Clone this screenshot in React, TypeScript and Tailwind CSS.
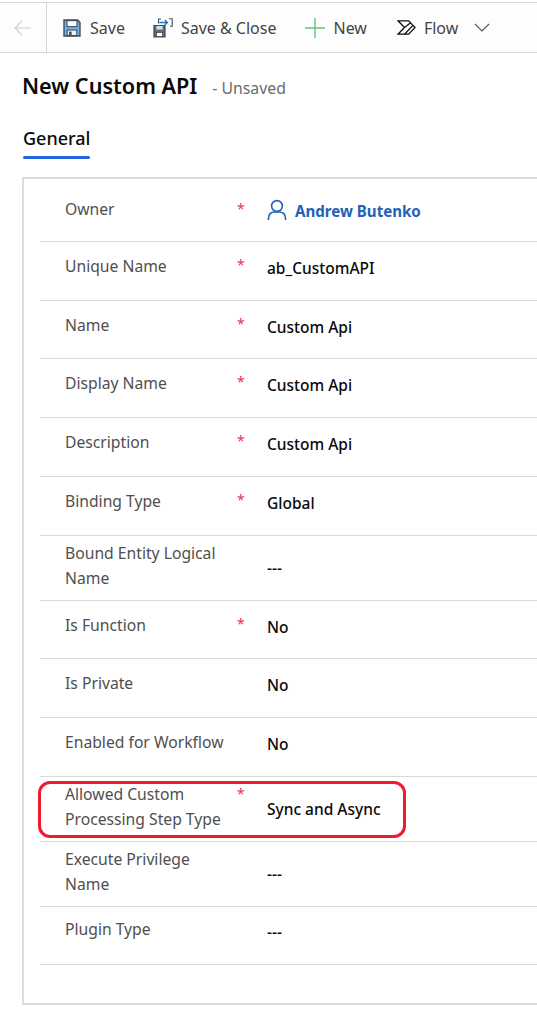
const font = "[font-family:'Noto_Sans',sans-serif]";

function SaveIcon() {
  return (
    <svg width="18" height="18" viewBox="0 0 18 18" className="shrink-0">
      <path d="M1 1h13.5L17 3.5V17H1z" fill="#6fb3ea" stroke="#3f4b58" strokeWidth="1.4" />
      <rect x="4" y="1.6" width="10" height="6" fill="#fff" stroke="#3f4b58" strokeWidth="1.1" />
      <rect x="4.2" y="11" width="9.6" height="5.6" fill="#eef2f5" stroke="#3f4b58" strokeWidth="1.1" />
      <rect x="6" y="12.6" width="2.6" height="3.6" fill="#3f4b58" />
    </svg>
  );
}

function SaveCloseIcon() {
  return (
    <svg width="20" height="20" viewBox="0 0 20 20" className="shrink-0">
      <path d="M1 7.5h11V19H1z" fill="#5f6b78" stroke="#3f4b58" strokeWidth="1.2" />
      <rect x="3.4" y="8" width="6.2" height="3.6" fill="#d8dee4" />
      <rect x="3.4" y="14.4" width="6.2" height="4.2" fill="#fff" stroke="#3f4b58" strokeWidth="0.8" />
      <path d="M5.5 5.5V1H8M16 .8h3.2v7.4H17" fill="none" stroke="#3f4b58" strokeWidth="1.1" />
      <path d="M6.5 4.5h8M11.8 2l2.6 2.5L11.8 7" fill="none" stroke="#1f6fd6" strokeWidth="1.3" />
    </svg>
  );
}

function FlowIcon() {
  return (
    <svg width="19" height="15" viewBox="0 0 19 15" className="shrink-0" fill="none" stroke="#111" strokeWidth="1.3">
      <path d="M1 .8h10.7L18 7.5 11.7 14.2H1L7.5 7.5z" />
      <path d="M7.5 7.5 13.6 2.8M7.6 14.2 15.6 5.6" />
    </svg>
  );
}

type RowProps = { label: string; value: string; req?: boolean; h: string; kind?: "one" | "two" | "owner" | "plugin" };

function Row({ label, value, req, h, kind = "one" }: RowProps) {
  const labelPad = kind === "two" ? "pt-[5px]" : kind === "owner" ? "pt-[18px]" : kind === "plugin" ? "pt-[10px]" : "pt-[12px]";
  const starPad = kind === "two" ? "pt-[4px]" : kind === "owner" ? "pt-[17px]" : "pt-[10px]";
  const valuePad = kind === "two" ? "pt-[20px]" : kind === "plugin" ? "pt-[13px]" : "pt-[14px]";
  return (
    <div className={`flex border-b border-[#d9d9d9] ${h}`}>
      <div className={`w-[197px] shrink-0 pl-[25px] pr-2 text-[15.7px] leading-[25px] text-[#4f4f4f] ${labelPad}`}>{label}</div>
      <div className={`w-[30px] shrink-0 text-[14px] leading-[25px] text-[#e8344a] ${starPad}`}>{req ? "*" : ""}</div>
      {kind === "owner" ? (
        <div className="flex items-start gap-[8px] pt-[20px] text-[15.1px] font-bold leading-[25px] text-[#1f62b8]">
          <svg width="20" height="22" viewBox="0 0 20 22" fill="none" stroke="#1f62b8" strokeWidth="1.6">
            <circle cx="10" cy="7" r="5.4" />
            <path d="M1.5 21v-1.5C1.5 15.5 4 13 8 13h4c4 0 6.5 2.5 6.5 6.5V21" />
          </svg>
          {value}
        </div>
      ) : (
        <div className={`text-[15.5px] font-medium leading-[25px] text-[#0a0a0a] ${valuePad}`}>{value}</div>
      )}
    </div>
  );
}

export default function App() {
  return (
    <div className={`h-[1024px] w-[537px] overflow-hidden bg-white ${font}`}>
      <div className="mt-[2px] flex h-[51px] items-center border-y border-[#d9d9d9] bg-[#fdfdfd] text-[16px] text-[#444]">
        <div className="flex h-full w-[47px] shrink-0 items-center justify-center border-r border-[#d5d5d5]">
          <svg width="18" height="16" viewBox="0 0 18 16" fill="none" stroke="#cfcfcf" strokeWidth="1.2">
            <path d="M17 8H1M8 1 1 8l7 7" />
          </svg>
        </div>
        <div className="ml-[16px] flex items-center gap-[9px]"><SaveIcon /><span>Save</span></div>
        <div className="ml-[28px] flex items-center gap-[8px]"><SaveCloseIcon /><span>Save &amp; Close</span></div>
        <div className="ml-[29px] flex items-center gap-[8px]">
          <svg width="20" height="20" viewBox="0 0 20 20" stroke="#5fc281" strokeWidth="1.4"><path d="M10 0v20M0 10h20" /></svg>
          <span>New</span>
        </div>
        <div className="ml-[30px] flex items-center gap-[8px]"><FlowIcon /><span>Flow</span></div>
        <svg className="ml-[16px]" width="16" height="9" viewBox="0 0 16 9" fill="none" stroke="#555" strokeWidth="1.1"><path d="M1 1l7 7 7-7" /></svg>
      </div>
      <div className="ml-[22px] mt-[17px] flex items-baseline">
        <h1 className="text-[21.6px] font-semibold leading-[32px] text-[#0a0a0a]">New Custom API</h1>
        <span className="ml-[15px] text-[15.8px] text-[#6b6b6b]">- Unsaved</span>
      </div>
      <div className="ml-[23px] mt-[23px] w-[67px]">
        <div className="text-[18px] font-medium leading-[26px] text-[#0a0a0a]">General</div>
        <div className="mt-[5px] h-[3px] rounded-full bg-[#2266e3]" />
      </div>
      <div className="ml-[22px] mt-[18px] h-[828px] border-y-2 border-l-2 border-[#dcdcdc] pl-[16px]">
        <Row label="Owner" value="Andrew Butenko" req h="h-[63px]" kind="owner" />
        <Row label="Unique Name" value="ab_CustomAPI" req h="h-[59px]" />
        <Row label="Name" value="Custom Api" req h="h-[58px]" />
        <Row label="Display Name" value="Custom Api" req h="h-[59px]" />
        <Row label="Description" value="Custom Api" req h="h-[59px]" />
        <Row label="Binding Type" value="Global" req h="h-[59px]" />
        <Row label="Bound Entity Logical Name" value="---" h="h-[65px]" kind="two" />
        <Row label="Is Function" value="No" req h="h-[58px]" />
        <Row label="Is Private" value="No" h="h-[59px]" />
        <Row label="Enabled for Workflow" value="No" h="h-[59px]" />
        <div className="relative">
          <Row label="Allowed Custom Processing Step Type" value="Sync and Async" req h="h-[65px]" kind="two" />
          <div className="absolute left-[-2px] top-[4px] h-[57px] w-[368px] rounded-[12px] border-[3px] border-[#ee1c2e]" />
        </div>
        <Row label="Execute Privilege Name" value="---" h="h-[65px]" kind="two" />
        <Row label="Plugin Type" value="---" h="h-[58px]" kind="plugin" />
      </div>
    </div>
  );
}
